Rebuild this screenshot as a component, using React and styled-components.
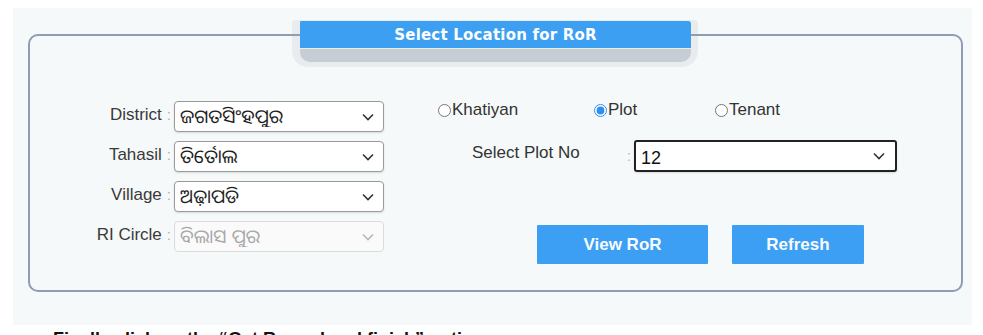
import styled, { createGlobalStyle } from "styled-components"

const GlobalStyle = createGlobalStyle`
  body {
    margin: 0;
    background: #ffffff;
    font-family: "Liberation Sans", Arial, sans-serif;
    overflow: hidden;
  }
`;

const chevron = (color) =>
  `url("data:image/svg+xml,%3Csvg xmlns='http://www.w3.org/2000/svg' width='12' height='8' viewBox='0 0 12 8'%3E%3Cpath d='M1 1.5l5 5 5-5' fill='none' stroke='${color}' stroke-width='1.6'/%3E%3C/svg%3E")`;

const Page = styled.div`
  padding: 8px 11px 0 13px;
  height: 335px;
  box-sizing: border-box;
`;

const Panel = styled.div`
  position: relative;
  z-index: 0;
  background-color: #f5f9f9;
  height: 317px;
  box-sizing: border-box;
  padding: 13px 9px 0 15px;
`;

const Frame = styled.fieldset`
  margin: 0;
  padding: 0;
  height: 271px;
  box-sizing: border-box;
  border: 2px solid #8e9cb4;
  border-radius: 10px;
  min-width: 0;
`;

const Legend = styled.legend`
  position: relative;
  margin: 0 auto;
  padding: 2px 0 0;
  width: 391px;
  height: 27px;
  box-sizing: border-box;
  background-color: #3c9ff2;
  border-radius: 1px 3px 0 0;
  color: #fbfdff;
  font-family: "DejaVu Sans", Verdana, sans-serif;
  font-weight: bold;
  font-size: 15px;
  letter-spacing: 0.2px;
  line-height: 25px;
  text-align: center;

  &::before {
    content: "";
    position: absolute;
    left: -8px;
    right: -7px;
    top: -1px;
    bottom: -19px;
    background-color: #e8ecee;
    border-radius: 4px 4px 16px 16px;
    z-index: -1;
  }

  &::after {
    content: "";
    position: absolute;
    left: 0;
    right: 0;
    top: 28px;
    height: 13px;
    background-color: #c6cdd5;
    border-radius: 0 0 10px 10px;
    z-index: -1;
  }
`;

const Body = styled.div`
  display: grid;
  grid-template-columns: 400px 1fr;
  padding-top: 53px;
`;

const LeftCol = styled.div`
  display: flex;
  flex-direction: column;
  gap: 9px;
`;

const FieldRow = styled.div`
  display: flex;
  align-items: center;
  height: 31px;
`;

const Label = styled.label`
  width: 144px;
  padding-right: 3px;
  box-sizing: border-box;
  text-align: right;
  font-size: 17px;
  color: #3a3a3a;
  white-space: nowrap;
  margin-top: -4px;
`;

const Colon = styled.span`
  margin-left: 5px;
  color: #b0b0b0;
  font-size: 15px;
`;

const Select = styled.select`
  appearance: none;
  width: 210px;
  height: 31px;
  box-sizing: border-box;
  padding: 0 28px 0 5px;
  font-family: "Liberation Sans", "Noto Sans Oriya", "Noto Sans", Arial, sans-serif;
  font-size: 19px;
  color: #1e1e1e;
  background: #ffffff ${chevron("%23333333")} no-repeat right 9px center;
  border: 1px solid #9a9a9a;
  border-radius: 4px;
  box-shadow: 0 1px 2px rgba(0, 0, 0, 0.12);

  &:disabled {
    color: #a8a8a8;
    border-color: #dcdcdc;
    box-shadow: none;
    background: #fafafa ${chevron("%23b8b8b8")} no-repeat right 9px center;
    opacity: 1;
  }
`;

const RightCol = styled.div`
  display: flex;
  flex-direction: column;
`;

const RadioRow = styled.div`
  display: flex;
  align-items: center;
  height: 20px;
  margin: -1px 0 0 8px;
`;

const RadioLabel = styled.label`
  display: flex;
  align-items: center;
  width: ${(p) => p.$w}px;
  font-size: 17px;
  color: #333333;
`;

const Radio = styled.input`
  margin: 0 1px 0 0;
  width: 13px;
  height: 13px;
  accent-color: #2f8ef0;
`;

const PlotRow = styled.div`
  display: flex;
  align-items: center;
  margin: 20px 0 0 42px;
  height: 32px;
`;

const PlotLabel = styled.span`
  width: 155px;
  font-size: 17px;
  color: #333333;
  margin-top: -6px;
`;

const PlotColon = styled.span`
  width: 7px;
  color: #b8b8b8;
  font-size: 14px;
`;

const PlotSelect = styled(Select)`
  width: 263px;
  height: 32px;
  font-family: "Liberation Sans", Arial, sans-serif;
  font-size: 18px;
  color: #111111;
  border: 2px solid #222222;
  border-radius: 3px;
  padding-top: 4px;
  background-position: right 10px center;
`;

const ButtonRow = styled.div`
  display: flex;
  gap: 24px;
  margin: 53px 0 0 107px;
`;

const Button = styled.button`
  width: ${(p) => p.$w}px;
  height: 39px;
  border: none;
  border-radius: 1px;
  background-color: #3d9ff3;
  color: #f7fbff;
  font-family: "Liberation Sans", Arial, sans-serif;
  font-weight: bold;
  font-size: 17px;
  cursor: pointer;
`;

const Note = styled.p`
  margin: 4px 0 0 40px;
  font-size: 18px;
  font-weight: bold;
  color: #111111;
`;

const fields = [
  { label: "District", value: "ଜଗତସିଂହପୁର" },
  { label: "Tahasil", value: "ତିର୍ତୋଲ" },
  { label: "Village", value: "ଅଢ଼ାପଡି" },
  { label: "RI Circle", value: "ବିଲାସ ପୁର", disabled: true },
];

const App = () => {
  return (
    <Page>
      <GlobalStyle />
      <Panel>
        <Frame>
          <Legend>Select Location for RoR</Legend>
          <Body>
            <LeftCol>
              {fields.map((f) => (
                <FieldRow key={f.label}>
                  <Label>
                    {f.label}
                    <Colon>:</Colon>
                  </Label>
                  <Select defaultValue={f.value} disabled={f.disabled}>
                    <option>{f.value}</option>
                  </Select>
                </FieldRow>
              ))}
            </LeftCol>
            <RightCol>
              <RadioRow>
                <RadioLabel $w={156}>
                  <Radio type="radio" name="by" />
                  Khatiyan
                </RadioLabel>
                <RadioLabel $w={121}>
                  <Radio type="radio" name="by" defaultChecked />
                  Plot
                </RadioLabel>
                <RadioLabel $w={90}>
                  <Radio type="radio" name="by" />
                  Tenant
                </RadioLabel>
              </RadioRow>
              <PlotRow>
                <PlotLabel>Select Plot No</PlotLabel>
                <PlotColon>:</PlotColon>
                <PlotSelect defaultValue="12">
                  <option>12</option>
                </PlotSelect>
              </PlotRow>
              <ButtonRow>
                <Button $w={171}>View RoR</Button>
                <Button $w={132}>Refresh</Button>
              </ButtonRow>
            </RightCol>
          </Body>
        </Frame>
      </Panel>
      <Note>Finally click on the “Get Record and finish” option</Note>
    </Page>
  )
}

export default App;
